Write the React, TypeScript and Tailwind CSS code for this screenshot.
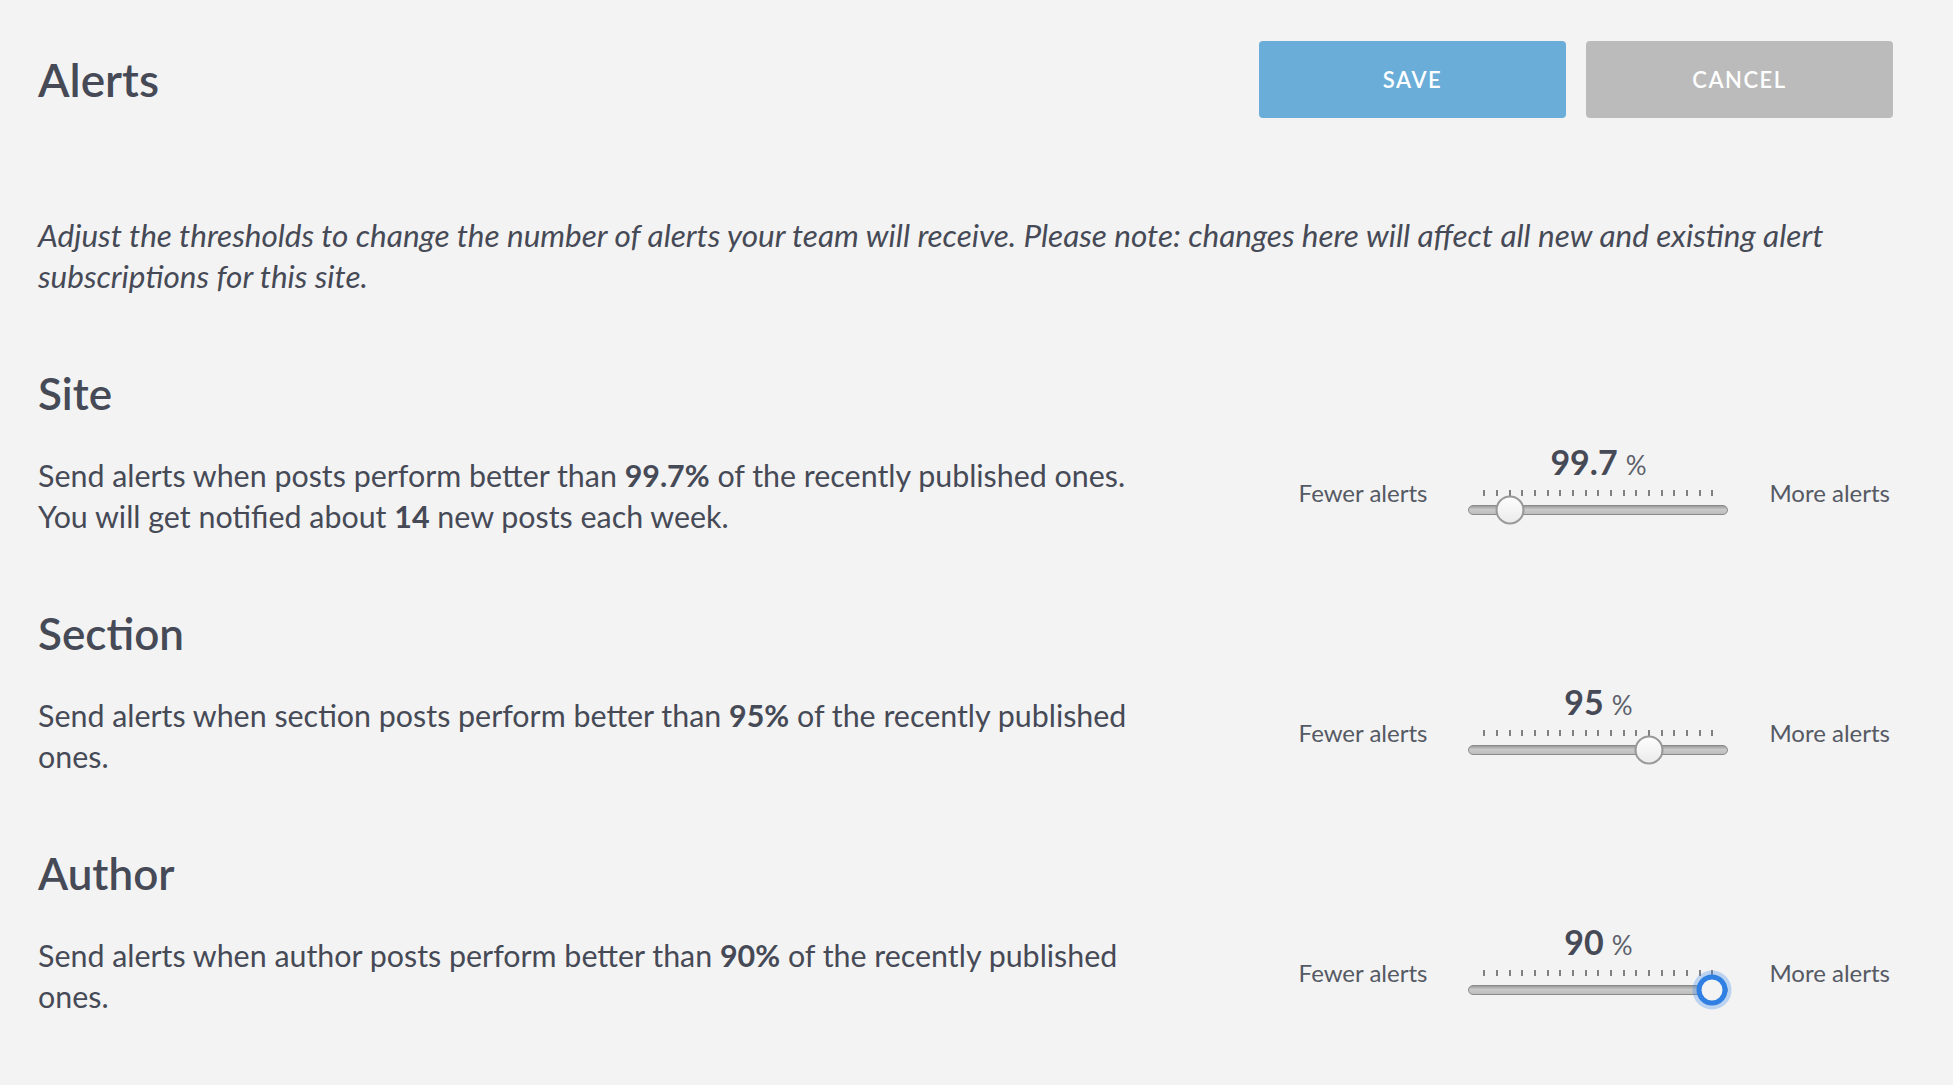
import type { ReactNode } from 'react'

interface ThresholdSectionProps {
  title: string
  value: string
  tick: number
  active?: boolean
  children: ReactNode
}

const TICKS = 19
const TICK_GAP = 228 / (TICKS - 1)

function ThresholdSlider({ value, tick, active }: { value: string; tick: number; active?: boolean }) {
  return (
    <div className="flex w-[260px] flex-col">
      <div className="flex h-[36px] items-center justify-center gap-[8px] leading-none">
        <span className="text-[34px] font-bold text-[#464a56]">{value}</span>
        <span className="mt-[5px] text-[26px] text-[#5d616b]">%</span>
      </div>
      {/* tick marks */}
      <div className="mx-[15px] mt-[10px] flex h-[6px] justify-between">
        {Array.from({ length: TICKS }, (_, i) => (
          <span key={i} className="h-[6px] w-[2px] bg-[#808080]" />
        ))}
      </div>
      <div className="relative mt-[9px] h-[10px] rounded-full border border-[#8a8a8a] bg-[linear-gradient(to_bottom,#9c9c9c,#c9c9c9_45%,#bdbdbd)]">
        <span
          className={
            active
              ? 'absolute top-1/2 h-[31px] w-[31px] -translate-x-1/2 -translate-y-1/2 rounded-full border-[5px] border-[#2f80e2] bg-[#f3f3f3] shadow-[0_0_0_4px_rgba(60,140,235,0.3)]'
              : 'absolute top-1/2 h-[29px] w-[29px] -translate-x-1/2 -translate-y-1/2 rounded-full border-2 border-[#999999] bg-[linear-gradient(to_bottom,#fdfdfd,#ebebeb)]'
          }
          style={{ left: 15 + tick * TICK_GAP }}
        />
      </div>
    </div>
  )
}

function ThresholdSection({ title, value, tick, active, children }: ThresholdSectionProps) {
  return (
    <section className="flex flex-col">
      <h2 className="text-[44px] leading-[53px] font-semibold text-[#464a56]">{title}</h2>
      <div className="mt-[35px] flex items-start justify-between">
        <p className="w-[1150px] text-[30.4px] leading-[41px] text-[#464a56]">{children}</p>
        <div className="-mt-[11px] flex items-start">
          <span className="mt-[34px] text-[24px] leading-[30px] text-[#555964]">Fewer alerts</span>
          <div className="mx-[41px]">
            <ThresholdSlider value={value} tick={tick} active={active} />
          </div>
          <span className="mt-[34px] text-[24px] leading-[30px] text-[#555964]">More alerts</span>
        </div>
      </div>
    </section>
  )
}

export default function App() {
  return (
    <div className="min-h-[1085px] bg-[#f3f3f3] pl-[38px] pr-[63px] pt-[41px] font-['Lato',sans-serif] text-[#464a56]">
      {/* Header */}
      <div className="mr-[-3px] flex items-center justify-between">
        <h1 className="text-[46px] leading-none font-semibold">Alerts</h1>
        <div className="flex gap-[20px]">
          <button className="h-[77px] w-[307px] rounded-[4px] bg-[#69add8] text-[22px] font-semibold tracking-[1.5px] text-white">
            SAVE
          </button>
          <button className="h-[77px] w-[307px] rounded-[4px] bg-[#bbbbbb] text-[22px] font-semibold tracking-[1.5px] text-white">
            CANCEL
          </button>
        </div>
      </div>

      <p className="mt-[97px] text-[31.5px] leading-[41px] italic">
        Adjust the thresholds to change the number of alerts your team will receive. Please note: changes here will
        affect all new and existing alert
        <br />
        subscriptions for this site.
      </p>

      <div className="mt-[70px] flex flex-col gap-[70px]">
        <ThresholdSection title="Site" value="99.7" tick={2}>
          Send alerts when posts perform better than <b className="font-bold">99.7%</b> of the recently published ones.
          <br />
          You will get notified about <b className="font-bold">14</b> new posts each week.
        </ThresholdSection>
        <ThresholdSection title="Section" value="95" tick={13}>
          Send alerts when section posts perform better than <b className="font-bold">95%</b> of the recently published
          <br />
          ones.
        </ThresholdSection>
        <ThresholdSection title="Author" value="90" tick={18} active>
          Send alerts when author posts perform better than <b className="font-bold">90%</b> of the recently published
          <br />
          ones.
        </ThresholdSection>
      </div>
    </div>
  )
}
